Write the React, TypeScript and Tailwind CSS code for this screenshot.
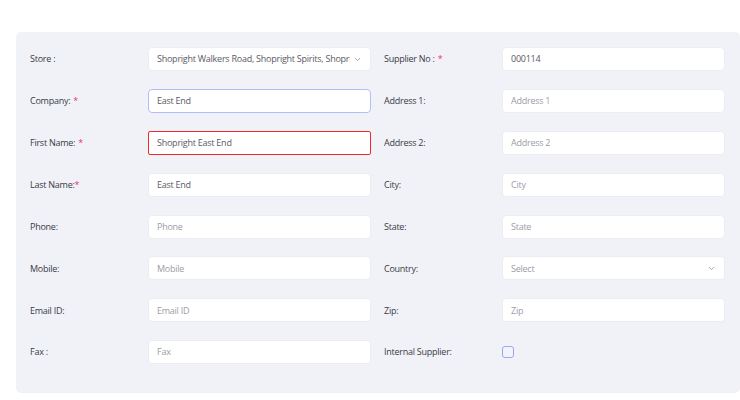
import { ChevronDown } from "lucide-react";

type Field = {
  label: string;
  required?: boolean;
  tightStar?: boolean;
  value?: string;
  placeholder?: string;
  kind?: "input" | "select" | "checkbox";
  state?: "focus" | "error";
};

const leftFields: Field[] = [
  { label: "Store :", kind: "select", value: "Shopright Walkers Road, Shopright Spirits, Shopright East End" },
  { label: "Company:", required: true, value: "East End", state: "focus" },
  { label: "First Name:", required: true, value: "Shopright East End", state: "error" },
  { label: "Last Name:", required: true, tightStar: true, value: "East End" },
  { label: "Phone:", placeholder: "Phone" },
  { label: "Mobile:", placeholder: "Mobile" },
  { label: "Email ID:", placeholder: "Email ID" },
  { label: "Fax :", placeholder: "Fax" },
];

const rightFields: Field[] = [
  { label: "Supplier No :", required: true, value: "000114" },
  { label: "Address 1:", placeholder: "Address 1" },
  { label: "Address 2:", placeholder: "Address 2" },
  { label: "City:", placeholder: "City" },
  { label: "State:", placeholder: "State" },
  { label: "Country:", kind: "select", placeholder: "Select" },
  { label: "Zip:", placeholder: "Zip" },
  { label: "Internal Supplier:", kind: "checkbox" },
];

const FormRow = ({ field }: { field: Field }) => {
  const border =
    field.state === "error"
      ? "border-[1.5px] border-[#ee2a2a] rounded-[2px]"
      : field.state === "focus"
      ? "border border-[#b4bdfa] rounded-[4px]"
      : "border border-[#ecedf3] rounded-[4px]";

  return (
    <div className="flex items-center h-6">
      <div className="w-[118px] shrink-0 text-[9px] tracking-[-0.25px] text-[#3a3a44]">
        {field.label}
        {field.required && (
          <span className={`text-[#f0326a] ${field.tightStar ? "" : "ml-[3px]"}`}>*</span>
        )}
      </div>
      {field.kind === "checkbox" ? (
        <div className="w-3 h-3 rounded-[3px] border-[1.5px] border-[#9aa6f5] bg-[#f3f4fb]" />
      ) : (
        <div
          className={`flex-1 h-6 bg-white flex items-center pl-[8px] pr-2 text-[9px] tracking-[-0.25px] overflow-hidden ${border}`}
        >
          <span
            className={`flex-1 min-w-0 whitespace-nowrap overflow-hidden ${
              field.value ? "text-[#5a5a64]" : "text-[#9c9ca6]"
            }`}
          >
            {field.value ?? field.placeholder}
          </span>
          {field.kind === "select" && (
            <ChevronDown className="w-[9px] h-[9px] text-[#8a8a94] ml-[3px] shrink-0" strokeWidth={2} />
          )}
        </div>
      )}
    </div>
  );
};

export default function App() {
  return (
    <div
      className="w-[740px] h-[400px] bg-white pt-8 pl-4"
      style={{ fontFamily: "'Open Sans', 'Liberation Sans', sans-serif" }}
    >
      <div className="w-[724px] h-[361px] bg-[#f1f2f8] rounded-[5px] pt-[15px] pl-[14px] pr-[15px]">
        <div className="grid grid-cols-2 gap-x-[13px]">
          <div className="flex flex-col gap-[17.9px]">
            {leftFields.map((f) => (
              <FormRow key={f.label} field={f} />
            ))}
          </div>
          <div className="flex flex-col gap-[17.9px]">
            {rightFields.map((f) => (
              <FormRow key={f.label} field={f} />
            ))}
          </div>
        </div>
      </div>
    </div>
  );
}
